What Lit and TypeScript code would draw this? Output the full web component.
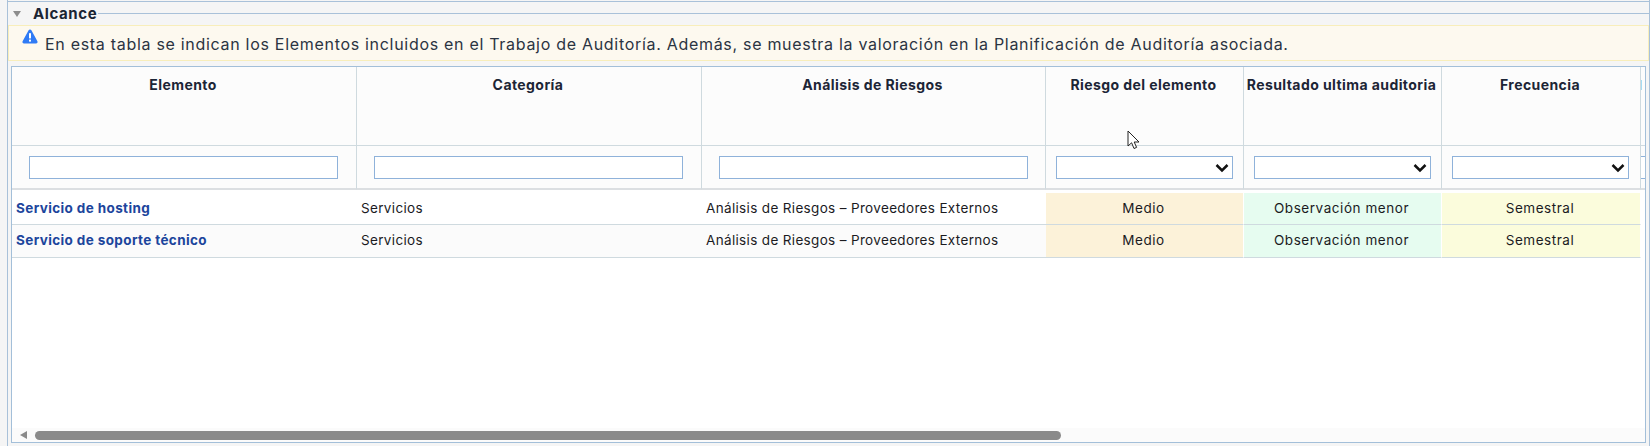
import { LitElement, html, css, svg } from "lit";
import { customElement } from "lit/decorators.js";

const cols = ["Elemento", "Categoría", "Análisis de Riesgos", "Riesgo del elemento", "Resultado ultima auditoria", "Frecuencia"];
const rows = ["Servicio de hosting", "Servicio de soporte técnico"];

@customElement("app-root")
export class AppRoot extends LitElement {
  static styles = css`
    :host { display: block; width: 1650px; height: 446px; background: #f5f5f5; font-family: "Inter", "Liberation Sans", sans-serif; color: #1c2536; overflow: hidden; position: relative; }
    .panel { margin-left: 7px; width: 1643px; height: 446px; padding-top: 1px; border-left: 1px solid #a9c1d9; border-right: 1px solid #a9c1d9; box-sizing: border-box; }
    .topline { height: 1px; background: #a9c1d9; margin-left: -1px; }
    .legend { display: flex; align-items: center; height: 23px; }
    .tri { width: 0; height: 0; border-left: 4.5px solid transparent; border-right: 4.5px solid transparent; border-top: 6px solid #8d8d8d; margin-left: 5px; margin-right: 12px; }
    .legend b { font-size: 15px; font-weight: 700; color: #1a2433; letter-spacing: 0.6px; line-height: 20px; }
    .rule { flex: 1; height: 1px; background: #a9c1d9; margin-left: 1px; }
    .alert { height: 36px; box-sizing: border-box; border: 1px solid #f8eebb; background: #fdf9ef; display: flex; padding-left: 13px; font-size: 16px; letter-spacing: 0.7px; color: #2b3442; line-height: 36px; }
    .alert svg { width: 16px; height: 15px; margin-top: 3px; margin-right: 7px; flex: none; }
    .frame { margin: 5px 0 0 3px; width: 1635px; height: 377px; box-sizing: border-box; border: 1px solid #a3bfd9; background: #fff; display: flex; flex-direction: column; overflow: hidden; }
    table { border-collapse: separate; border-spacing: 0; table-layout: fixed; width: 1641px; font-size: 13.5px; letter-spacing: 0.34px; }
    col.w1 { width: 345px; } col.w2 { width: 345px; } col.w3 { width: 344px; }
    col.w4, col.w5 { width: 198px; } col.w6 { width: 199px; } col.w7 { width: 12px; }
    th { background: #fcfcfc; border-right: 1px solid #cfdadf; border-bottom: 1px solid #cfdadf; height: 79px; padding: 0 2px 0 0; vertical-align: top; font-size: 14px; font-weight: 700; color: #1c2536; line-height: 36px; letter-spacing: 0.42px; white-space: nowrap; box-sizing: border-box; overflow: hidden; }
    th.last { border-right: 0; padding: 0; }
    .tick { display: block; width: 1px; height: 10px; margin-top: 13px; background: #a6dcf2; }
    td.f { background: #fcfcfc; height: 44px; border-right: 1px solid #cfdadf; border-bottom: 2px solid #dcdfe2; padding: 0; box-sizing: border-box; }
    td.f.last { border-right: 0; }
    .inp { display: block; height: 23px; box-sizing: border-box; border: 1px solid #8fb2da; background: #fff; position: relative; }
    .inp.t { width: 309px; margin-left: 17px; }
    .inp.s { width: 177px; margin-left: 10px; }
    .inp.sliver { width: 20px; margin: 0; border-left: 0; }
    .inp svg { position: absolute; right: 3px; top: 6px; width: 14px; height: 10px; }
    .gap td { height: 3px; padding: 0; }
    td.c { height: 32px; padding: 0 0 2px 4px; box-sizing: border-box; border-bottom: 1px solid #cfdadf; white-space: nowrap; color: #1b1b1f; }
    tr.alt td.c { height: 33px; background: #fbfbfb; }
    td.c.name { font-weight: 700; color: #1c459c; padding-left: 4px; letter-spacing: 0.38px; }
    td.c.v { text-align: center; padding: 0 2px 2px 0; border-right: 1px solid #fff; letter-spacing: 0.55px; }
    td.m, tr.alt td.m { background: #fcf2d9; }
    td.o, tr.alt td.o { background: #e6fcf0; }
    td.s, tr.alt td.s { background: #fbfcdc; }
    td.end, tr.alt td.end { background: #fff; border-bottom: 0; }
    .spacer { flex: 1; }
    .bar { height: 14px; background: #fbfbfb; display: flex; align-items: center; flex: none; }
    .arrow { width: 0; height: 0; border-top: 4.5px solid transparent; border-bottom: 4.5px solid transparent; border-right: 7px solid #8a8a8a; margin-left: 8px; margin-right: 8px; }
    .thumb { width: 1026px; height: 9px; border-radius: 5px; background: #8a8a8a; }
    .cursor { position: absolute; left: 1127px; top: 130px; width: 15px; height: 21px; }
  `;

  private caret() {
    return html`<svg viewBox="0 0 14 10"><path d="M1.5 2 L7 7.5 L12.5 2" fill="none" stroke="#111" stroke-width="2.5"/></svg>`;
  }

  render() {
    return html`
      <div class="panel">
        <div class="topline"></div>
        <div class="legend"><span class="tri"></span><b>Alcance</b><span class="rule"></span></div>
        <div class="alert">
          <svg viewBox="0 0 16 15"><path d="M8 0.5c.6 0 1.1.3 1.4.8l6 11c.6 1-.2 2.2-1.4 2.2H2c-1.2 0-2-1.2-1.4-2.2l6-11C6.9.8 7.4.5 8 .5z" fill="#2f7bf5"/><rect x="7" y="4.2" width="2" height="5.2" fill="#fff"/><rect x="7" y="10.6" width="2" height="2" fill="#fff"/></svg>
          <span>En esta tabla se indican los Elementos incluidos en el Trabajo de Auditoría. Además, se muestra la valoración en la Planificación de Auditoría asociada.</span>
        </div>
        <div class="frame">
          <table>
            <colgroup><col class="w1"/><col class="w2"/><col class="w3"/><col class="w4"/><col class="w5"/><col class="w6"/><col class="w7"/></colgroup>
            <tr>${cols.map((c) => html`<th>${c}</th>`)}<th class="last"><span class="tick"></span></th></tr>
            <tr>
              <td class="f"><span class="inp t"></span></td>
              <td class="f"><span class="inp t"></span></td>
              <td class="f"><span class="inp t"></span></td>
              <td class="f"><span class="inp s">${this.caret()}</span></td>
              <td class="f"><span class="inp s">${this.caret()}</span></td>
              <td class="f"><span class="inp s">${this.caret()}</span></td>
              <td class="f last"><span class="inp sliver"></span></td>
            </tr>
            <tr class="gap"><td colspan="7"></td></tr>
            ${rows.map((r, i) => html`
              <tr class=${i ? "alt" : ""}>
                <td class="c name">${r}</td>
                <td class="c">Servicios</td>
                <td class="c">Análisis de Riesgos – Proveedores Externos</td>
                <td class="c v m">Medio</td>
                <td class="c v o">Observación menor</td>
                <td class="c v s">Semestral</td>
                <td class="c end"></td>
              </tr>`)}
          </table>
          <div class="spacer"></div>
          <div class="bar"><span class="arrow"></span><span class="thumb"></span></div>
        </div>
      </div>
      <svg class="cursor" viewBox="0 0 15 21">${svg`<path d="M1 1 L1 16 L4.6 12.8 L7 18.5 L9.6 17.4 L7.2 12 L12 12 Z" fill="#fff" stroke="#222" stroke-width="1"/>`}</svg>
    `;
  }
}
